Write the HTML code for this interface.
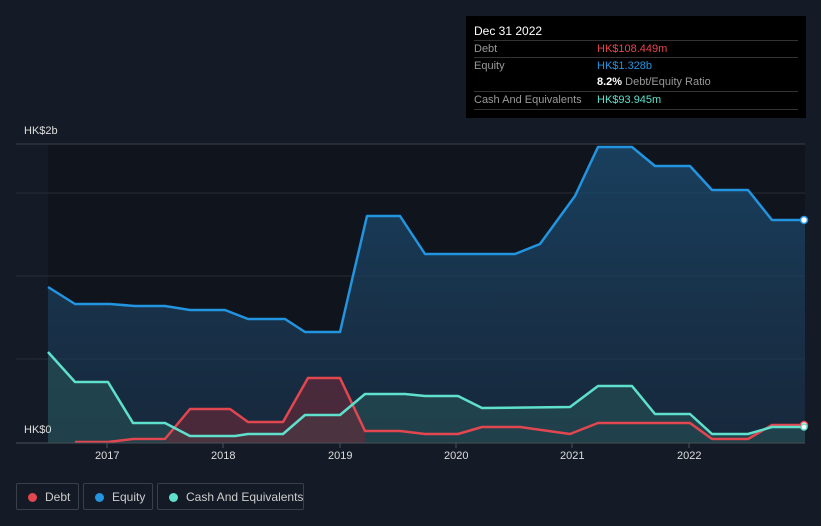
<!DOCTYPE html>
<html><head><style>
body{margin:0;width:821px;height:526px;background:#151b26;font-family:"Liberation Sans",sans-serif;overflow:hidden;position:relative}
.tip{position:absolute;left:466px;top:16px;width:340px;height:102px;background:#000}
.tip .h{position:absolute;left:8px;top:8px;color:#fff;font-size:12px}
.row{position:absolute;left:8px;width:324px;border-top:1px solid #333;height:17px;font-size:11px;line-height:17px;color:#999}
.row span{position:absolute;left:123px}
.leg{position:absolute;top:483px;height:27px;border:1px solid #3a404a;border-radius:2px;color:#ccc;font-size:12px;line-height:27px;box-sizing:border-box;white-space:nowrap}
.leg i{position:absolute;left:11px;top:9px;width:9px;height:9px;border-radius:50%}
.leg b{font-weight:normal;position:absolute;left:28px}
.ax{position:absolute;color:#ddd;font-size:11px}
</style></head><body>
<svg width="821" height="526" style="position:absolute;left:0;top:0">
<defs>
<linearGradient id="eg" x1="0" y1="0" x2="0" y2="1"><stop offset="0" stop-color="#1b4a6e" stop-opacity=".8"/><stop offset="1" stop-color="#1b3550" stop-opacity=".6"/></linearGradient>
</defs>
<rect x="48" y="144" width="757" height="299" fill="#10141c"/>
<line x1="16" y1="144" x2="805" y2="144" stroke="#3a404a"/>
<line x1="16" y1="193" x2="805" y2="193" stroke="#262c36"/>
<line x1="16" y1="276" x2="805" y2="276" stroke="#262c36"/>
<line x1="16" y1="359" x2="805" y2="359" stroke="#262c36"/>
<polygon fill="url(#eg)" points="48,287 75,304 110,304 135,306 165,306 190,310 225,310 248,319 285,319 305,332 340,332 352,280 367,216 400,216 425,254 470,254 515,254 540,244 575,196 598,147 632,147 655,166 690,166 712,190 748,190 772,220 805,220 805,443 48,443"/>
<polygon fill="#2a5a5a" fill-opacity=".5" points="48,352 75,382 108,382 133,423 165,423 190,436 235,436 248,434 283,434 305,415 340,415 365,394 405,394 425,396 458,396 482,408 570,407 598,386 632,386 655,414 690,414 712,434 748,434 772,427 805,427 805,443 48,443"/>
<polygon fill="#6a2a38" fill-opacity=".6" points="165,443 190,409 230,409 248,422 283,422 308,378 340,378 365,431 365,443"/>
<polyline fill="none" stroke="#2394df" stroke-width="2.5" stroke-linejoin="round" points="48,287 75,304 110,304 135,306 165,306 190,310 225,310 248,319 285,319 305,332 340,332 352,280 367,216 400,216 425,254 470,254 515,254 540,244 575,196 598,147 632,147 655,166 690,166 712,190 748,190 772,220 805,220"/>
<polyline fill="none" stroke="#e2464f" stroke-width="2.5" stroke-linejoin="round" points="75,442 108,442 133,439 165,439 190,409 230,409 248,422 283,422 308,378 340,378 365,431 400,431 425,434 458,434 482,427 520,427 570,434 598,423 690,423 712,439 748,439 772,425 805,425"/>
<polyline fill="none" stroke="#5ee0cc" stroke-width="2.5" stroke-linejoin="round" points="48,352 75,382 108,382 133,423 165,423 190,436 235,436 248,434 283,434 305,415 340,415 365,394 405,394 425,396 458,396 482,408 570,407 598,386 632,386 655,414 690,414 712,434 748,434 772,427 805,427"/>
<line x1="16" y1="443" x2="805" y2="443" stroke="#4a505a"/>
<g stroke="#4a505a"><line x1="107" y1="443" x2="107" y2="448"/><line x1="223" y1="443" x2="223" y2="448"/><line x1="340" y1="443" x2="340" y2="448"/><line x1="456" y1="443" x2="456" y2="448"/><line x1="572" y1="443" x2="572" y2="448"/><line x1="689" y1="443" x2="689" y2="448"/></g>
<circle cx="804" cy="220" r="3.5" fill="#fff" stroke="#2394df" stroke-width="1.5"/>
<circle cx="804" cy="425" r="3.5" fill="#fff" stroke="#e2464f" stroke-width="1.5"/>
<circle cx="804" cy="427" r="3" fill="#fff" stroke="#5ee0cc" stroke-width="1.5"/>
</svg>
<div class="ax" style="left:24px;top:125px">HK$2b</div>
<div class="ax" style="left:24px;top:424px">HK$0</div>
<div class="ax" style="left:95px;top:450px">2017</div>
<div class="ax" style="left:211px;top:450px">2018</div>
<div class="ax" style="left:328px;top:450px">2019</div>
<div class="ax" style="left:444px;top:450px">2020</div>
<div class="ax" style="left:560px;top:450px">2021</div>
<div class="ax" style="left:677px;top:450px">2022</div>
<div class="tip">
<div class="h">Dec 31 2022</div>
<div class="row" style="top:24px">Debt<span style="color:#e8464f">HK$108.449m</span></div>
<div class="row" style="top:41px">Equity<span style="color:#2394df">HK$1.328b</span></div>
<div class="row" style="top:58px;border-top:none"><span><b style="color:#fff">8.2%</b> Debt/Equity Ratio</span></div>
<div class="row" style="top:75px;border-bottom:1px solid #333">Cash And Equivalents<span style="color:#5ee0cc">HK$93.945m</span></div>
</div>
<div class="leg" style="left:16px;width:63px"><i style="background:#e2464f"></i><b>Debt</b></div>
<div class="leg" style="left:83px;width:70px"><i style="background:#2394df"></i><b>Equity</b></div>
<div class="leg" style="left:157px;width:147px"><i style="background:#5ee0cc"></i><b>Cash And Equivalents</b></div>
</body></html>
